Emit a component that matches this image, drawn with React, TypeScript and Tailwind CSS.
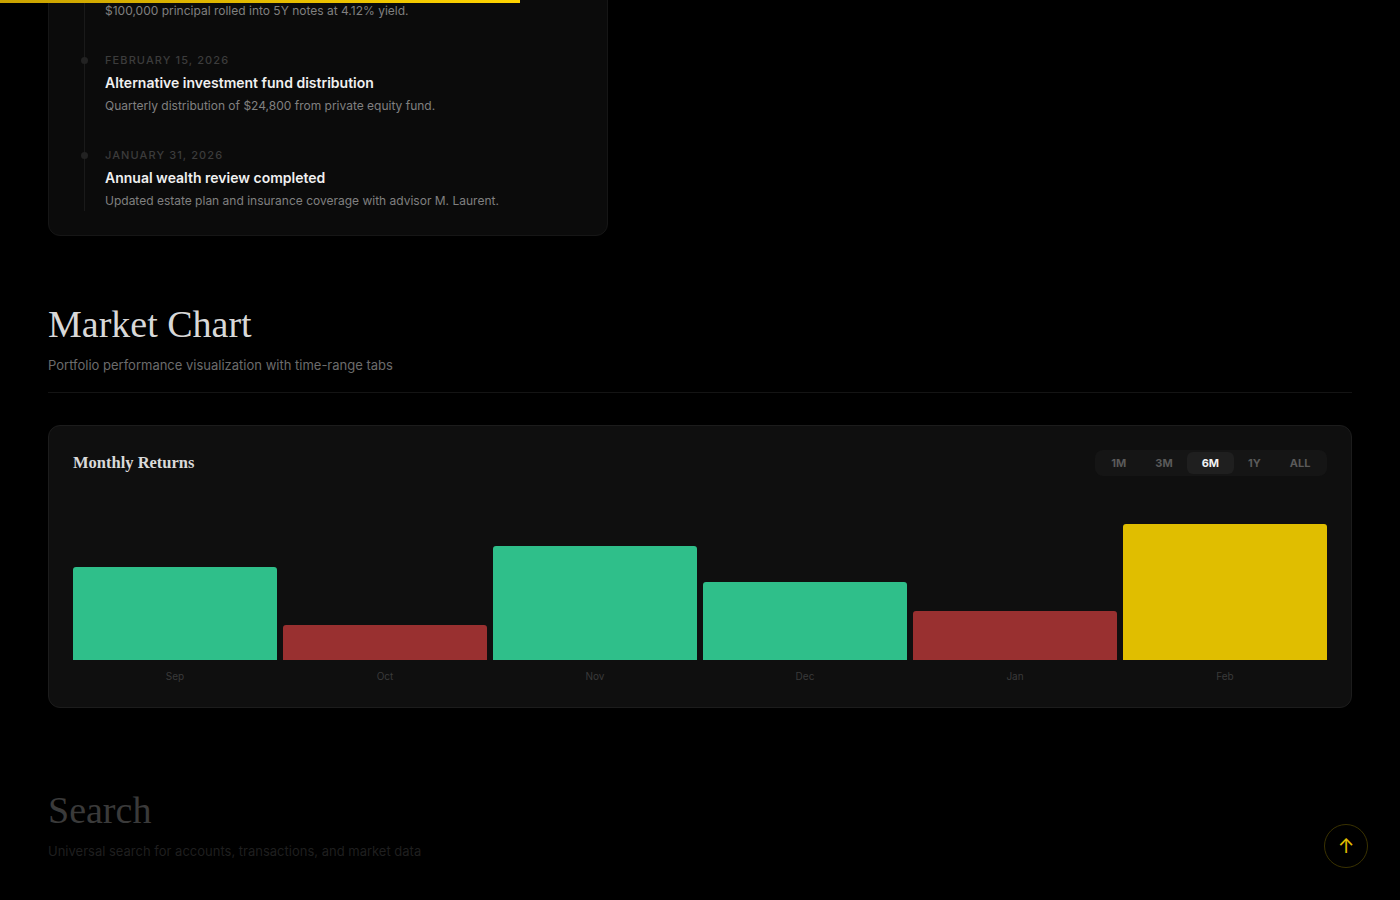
import { useState } from 'react'

const events = [
  {
    date: 'March 1, 2026',
    title: 'Treasury ladder rebalanced',
    text: '$100,000 principal rolled into 5Y notes at 4.12% yield.',
  },
  {
    date: 'February 15, 2026',
    title: 'Alternative investment fund distribution',
    text: 'Quarterly distribution of $24,800 from private equity fund.',
  },
  {
    date: 'January 31, 2026',
    title: 'Annual wealth review completed',
    text: 'Updated estate plan and insurance coverage with advisor M. Laurent.',
  },
]

const months = [
  { label: 'Sep', h: 93,  tone: 'up' },
  { label: 'Oct', h: 35,  tone: 'down' },
  { label: 'Nov', h: 114, tone: 'up' },
  { label: 'Dec', h: 78,  tone: 'up' },
  { label: 'Jan', h: 49,  tone: 'down' },
  { label: 'Feb', h: 136, tone: 'current' },
]

const ranges = ['1M', '3M', '6M', '1Y', 'ALL']

const serif = { fontFamily: '"Liberation Serif", "DejaVu Serif", serif' }

function barColor(tone: string) {
  if (tone === 'down') return 'bg-[#993030]'
  if (tone === 'current') return 'bg-[#e0be00]'
  return 'bg-[#2fbf8a]'
}

export default function App() {
  const [range, setRange] = useState('6M')

  return (
    <div
      className="min-h-screen bg-black text-white overflow-hidden"
      style={{ fontFamily: 'Inter, "Noto Sans", sans-serif' }}
    >
      {/* Scroll progress */}
      <div className="fixed top-0 left-0 h-[3px] w-[520px] bg-gradient-to-r from-[#c9a200] to-[#ffd400] z-20" />

      <main className="px-12 mt-[-76px] pb-24">
        {/* Timeline card */}
        <div className="w-[560px] rounded-xl border border-[#161616] bg-[#0b0b0b] pt-8 pb-6 px-8">
          <ul className="ml-[3px] border-l border-[#1a1a1a]">
            {events.map((ev, i) => (
              <li key={ev.title} className={`relative pl-5 ${i < events.length - 1 ? 'pb-[31px]' : ''}`}>
                <span className="absolute left-[-4px] top-[5px] w-[7px] h-[7px] rounded-full bg-[#222]" />
                <div className="text-[11px] leading-4 font-medium uppercase tracking-[0.1em] text-[#3c3c3c]">
                  {ev.date}
                </div>
                <div className="mt-[5px] text-[14px] leading-5 font-semibold text-[#f0f0f0]">{ev.title}</div>
                <div className="mt-[3px] text-[12px] leading-5 text-[#808080]">{ev.text}</div>
              </li>
            ))}
          </ul>
        </div>

        {/* Market Chart */}
        <section className="mt-[65px]">
          <h2 className="text-[38px] leading-[46px] text-[#d8d8d8]" style={serif}>Market Chart</h2>
          <p className="mt-2 text-[13px] leading-5 text-[#6c6c6c]">
            Portfolio performance visualization with time-range tabs
          </p>
          <div className="mt-[17px] h-px bg-[#141414]" />

          <div className="mt-8 rounded-xl border border-[#1c1c1c] bg-[#0f0f0f] px-6 pt-6 pb-[23px]">
            <div className="flex items-center justify-between h-[26px]">
              <h3 className="text-[16.5px] font-semibold text-[#dadada]" style={serif}>Monthly Returns</h3>
              <div className="flex p-[2px] rounded-lg bg-[#151515]">
                {ranges.map(r => (
                  <button
                    key={r}
                    onClick={() => setRange(r)}
                    className={`h-[22px] px-[14.5px] rounded-md text-[11px] font-bold ${
                      range === r ? 'bg-[#1f1f1f] text-[#f2f2f2]' : 'text-[#5a5a5a]'
                    }`}
                  >
                    {r}
                  </button>
                ))}
              </div>
            </div>

            <div className="mt-6 h-[160px] flex items-end gap-1.5">
              {months.map(m => (
                <div
                  key={m.label}
                  className={`flex-1 rounded-t-[3px] ${barColor(m.tone)}`}
                  style={{ height: m.h }}
                />
              ))}
            </div>
            <div className="mt-[9px] flex gap-1.5">
              {months.map(m => (
                <div key={m.label} className="flex-1 text-center text-[10px] leading-[15px] text-[#3a3a3a]">
                  {m.label}
                </div>
              ))}
            </div>
          </div>
        </section>

        {/* Search (fading in) */}
        <section className="mt-[79px]">
          <h2 className="text-[38px] leading-[46px] text-[#3a3a3a]" style={serif}>Search</h2>
          <p className="mt-2 text-[13px] leading-5 text-[#1f1f1f]">
            Universal search for accounts, transactions, and market data
          </p>
        </section>
      </main>

      {/* Back to top */}
      <button className="fixed bottom-8 right-8 w-11 h-11 rounded-full border border-[#3a3200] bg-black flex items-center justify-center text-[#e0be00] text-[20px] leading-none">
        ↑
      </button>
    </div>
  )
}
